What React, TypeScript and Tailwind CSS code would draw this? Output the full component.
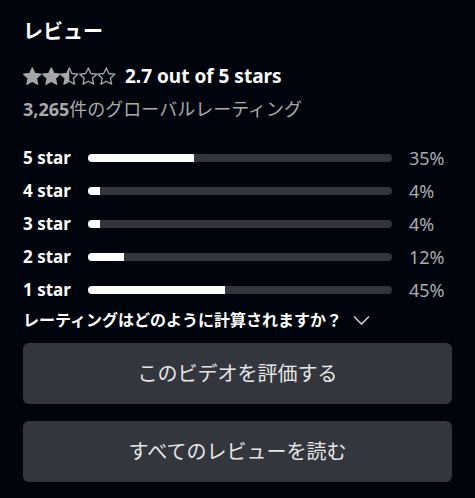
import React from 'react';

const rows = [
  { label: '5 star', pct: 35 },
  { label: '4 star', pct: 4 },
  { label: '3 star', pct: 4 },
  { label: '2 star', pct: 12 },
  { label: '1 star', pct: 45 },
];

const STAR = 'M12 2.5l2.9 6.1 6.6.8-4.9 4.6 1.3 6.6L12 17.3l-5.9 3.3 1.3-6.6-4.9-4.6 6.6-.8z';

function Star({ fill }: { fill: 'full' | 'half' | 'empty' }) {
  return (
    <svg width="18.6" height="19" viewBox="1.6 1.6 20.8 20.8" className="shrink-0">
      <defs>
        <clipPath id="half-clip">
          <rect x="0" y="0" width="12" height="24" />
        </clipPath>
      </defs>
      <path d={STAR} fill={fill === 'full' ? '#a6a6a6' : 'none'} stroke="#a6a6a6" strokeWidth="1.5" strokeLinejoin="round" />
      {fill === 'half' && <path d={STAR} fill="#a6a6a6" clipPath="url(#half-clip)" />}
    </svg>
  );
}

export default function App() {
  return (
    <div
      className="h-[498px] w-[475px] bg-[#00050d] px-[23px] pt-[19px] text-white"
      style={{ fontFamily: '"Noto Sans", "Noto Sans CJK JP", sans-serif' }}
    >
      <div className="text-[20px] font-bold leading-[26px]">レビュー</div>
      <div className="mt-[20px] flex items-center gap-[9px]">
        <div className="flex">
          <Star fill="full" />
          <Star fill="full" />
          <Star fill="half" />
          <Star fill="empty" />
          <Star fill="empty" />
        </div>
        <div className="text-[19px] font-bold leading-[22px]">2.7 out of 5 stars</div>
      </div>
      <div className="mt-[11px] text-[18px] leading-[22px] text-[#aaaaaa]">
        <span className="font-bold">3,265</span>件のグローバルレーティング
      </div>
      <div className="mt-[27px] flex flex-col gap-[11px]">
        {rows.map((row) => (
          <div key={row.label} className="flex h-[22px] items-center">
            <div className="w-[65px] text-[17px] font-bold">{row.label}</div>
            <div className="h-[8px] w-[304px] overflow-hidden rounded-full bg-[#33363d]">
              <div className="h-full bg-white" style={{ width: `${row.pct}%` }} />
            </div>
            <div className="ml-[17px] text-[18px] text-[#a9acb0]">{row.pct}%</div>
          </div>
        ))}
      </div>
      <div className="mt-[8px] flex items-center gap-[10px]">
        <span className="text-[16px] font-bold leading-[22px]">レーティングはどのように計算されますか？</span>
        <svg width="19" height="12" viewBox="0 0 19 12" fill="none">
          <path d="M2 2.5l7.5 7.5 7.5-7.5" stroke="#c8c8c8" strokeWidth="1.6" />
        </svg>
      </div>
      <div className="mt-[12px] flex flex-col gap-[17px]">
        <button className="flex h-[61px] items-center justify-center rounded-[6px] bg-[#33363d] text-[20px] text-[#e6e6e6]">
          このビデオを評価する
        </button>
        <button className="flex h-[61px] items-center justify-center rounded-[6px] bg-[#33363d] text-[20px] text-[#e6e6e6]">
          すべてのレビューを読む
        </button>
      </div>
    </div>
  );
}
